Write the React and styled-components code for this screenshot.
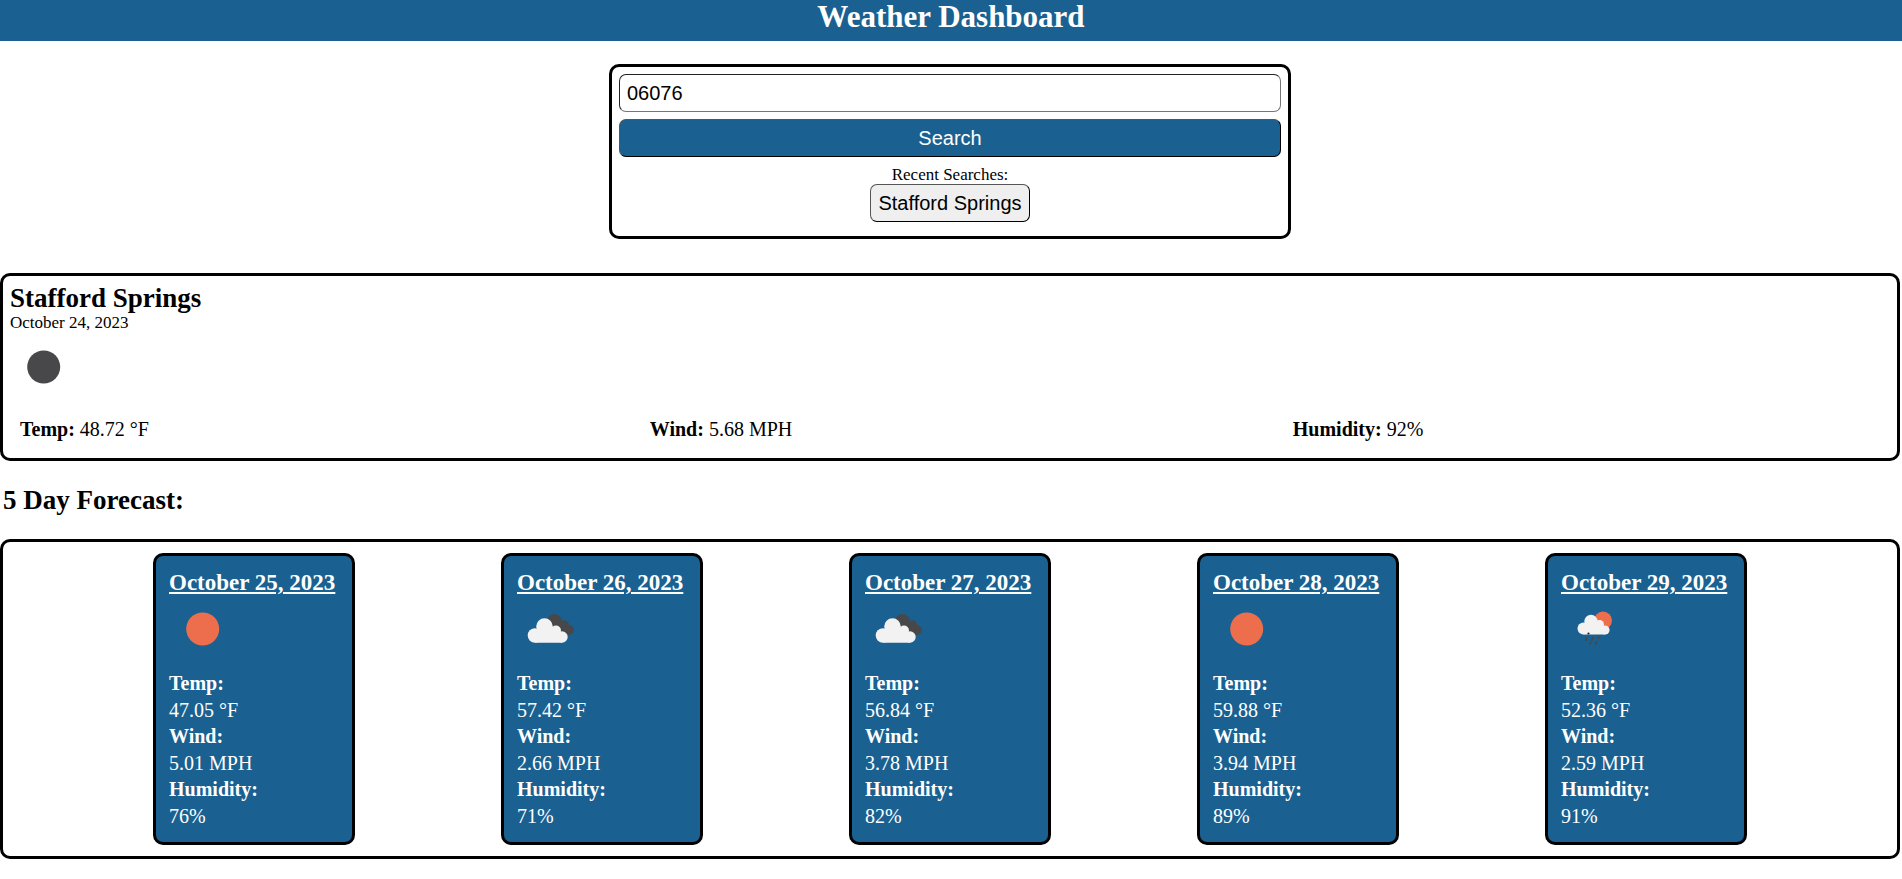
import React, { useState } from "react";
import styled, { createGlobalStyle } from "styled-components";

const BLUE = "#1a6191";

const GlobalStyle = createGlobalStyle`
  *, *::before, *::after { box-sizing: border-box; }
  body {
    margin: 0;
    background: #fff;
    color: #000;
    font-family: "Liberation Serif", "Times New Roman", serif;
    font-size: 17px;
  }
  h1, h2, h3, p, dl, dt, dd { margin: 0; }
`;

const Header = styled.header`
  padding-bottom: 8px;
  background: ${BLUE};
  color: #fff;
  text-align: center;
`;

const Title = styled.h1`
  font-size: 31px;
  line-height: 33px;
`;

const Page = styled.main`
  display: flex;
  flex-direction: column;
  padding-right: 2px;
`;

const Panel = styled.section`
  border: 3px solid #000;
  border-radius: 10px;
`;

const SearchPanel = styled(Panel)`
  width: 35.9%;
  min-width: 300px;
  margin: 23px auto 34px;
  padding: 7px 7px 14px;
`;

const SearchForm = styled.form`
  display: flex;
  flex-direction: column;
  gap: 7px;
`;

const controlStyle = `
  height: 38px;
  padding: 0 7px;
  border-radius: 7px;
  font-family: "Liberation Sans", Arial, sans-serif;
  font-size: 20px;
`;

const SearchInput = styled.input`
  ${controlStyle}
  border: 1px solid;
  border-color: #222 #767676 #767676 #222;
  background: #fff;
  color: #000;
`;

const Button = styled.button`
  ${controlStyle}
  border: 1px solid;
  border-color: #555 #000 #000 #555;
  background: ${(p) => (p.$primary ? BLUE : "#efefef")};
  color: ${(p) => (p.$primary ? "#fff" : "#000")};
  cursor: pointer;
`;

const Recent = styled.div`
  display: flex;
  flex-direction: column;
  align-items: center;
  padding-top: 8px;
  line-height: 19px;
`;

const CurrentPanel = styled(Panel)`
  padding: 7px 7px 14px;
`;

const Heading = styled.h2`
  font-size: 27px;
  line-height: 30px;
`;

const CurrentDate = styled.p`
  margin-bottom: 1px;
  line-height: 20px;
`;

const WeatherIcon = styled.svg`
  display: block;
  width: 67px;
  height: 67px;
`;

const Stats = styled.dl`
  display: grid;
  grid-template-columns: 33.5% 34.2% 1fr;
  padding: 17px 0 3px;
  font-size: 20px;
  line-height: 23px;
`;

const Stat = styled.div`
  display: flex;
  gap: 5px;
  padding-left: 10px;
`;

const StatLabel = styled.dt`
  font-weight: bold;
`;

const ForecastHeading = styled(Heading)`
  padding: 24px 3px;
`;

const ForecastPanel = styled(Panel)`
  display: flex;
  flex-wrap: wrap;
  justify-content: space-evenly;
  row-gap: 11px;
  padding: 11px 4px;
`;

const DayCard = styled.article`
  width: 202px;
  padding: 13px;
  border: 3px solid #000;
  border-radius: 10px;
  background: ${BLUE};
  color: #fff;
`;

const DayTitle = styled.h3`
  font-size: 23px;
  line-height: 27px;
  text-decoration: underline;
  white-space: nowrap;
`;

const DayStats = styled.dl`
  padding-top: 7px;
  font-size: 20px;
`;

const DayLabel = styled.dt`
  font-weight: bold;
  line-height: 27px;
`;

const DayValue = styled.dd`
  line-height: 26px;
`;

function Icon({ kind }) {
  return (
    <WeatherIcon viewBox="0 0 67 67" role="img" aria-label={kind}>
      {kind === "clear night" && <circle cx="33.7" cy="33" r="16.5" fill="#48484a" />}
      {kind === "sunny" && <circle cx="33.7" cy="33" r="16.5" fill="#ec6e4c" />}
      {kind === "cloudy" && (
        <>
          <g fill="#48484a">
            <circle cx="37.5" cy="25.5" r="7.5" />
            <circle cx="47.5" cy="28.7" r="4.5" />
            <circle cx="52" cy="34" r="5" />
            <path d="M38 25L47 28L52 34V39H46L36 34Z" />
          </g>
          <g fill="#f2f2f2">
            <circle cx="27.5" cy="30.5" r="8.3" />
            <circle cx="39" cy="34.5" r="5" />
            <circle cx="18" cy="39.5" r="7.3" />
            <circle cx="45" cy="41" r="5.7" />
            <path d="M18 35L27 30L38 34L45 40V46.7H18Z" />
          </g>
        </>
      )}
      {kind === "sun and rain" && (
        <>
          <circle cx="42" cy="24.5" r="9" fill="#ec6e4c" />
          <g fill="#f2f2f2">
            <circle cx="30" cy="25.5" r="6.7" />
            <circle cx="38.5" cy="28.5" r="4.5" />
            <circle cx="22.5" cy="32.5" r="6" />
            <circle cx="44" cy="34" r="4.6" />
            <path d="M22.5 28L29 25L38.5 28L44 33V38.5H22.5Z" />
          </g>
          <circle cx="27.5" cy="37.5" r="1.1" fill="#222" />
          <g stroke="#48484a" strokeWidth="1.7" strokeLinecap="round">
            <path d="M25.8 42L24.8 44.2M31.8 41.5L30.8 44M37.7 40.5L37 42M29.9 46.5L29.2 47.8M35.7 46L34.5 48.2" />
          </g>
        </>
      )}
    </WeatherIcon>
  );
}

const current = [
  ["Temp:", "48.72 °F"],
  ["Wind:", "5.68 MPH"],
  ["Humidity:", "92%"],
];

const forecast = [
  { date: "October 25, 2023", icon: "sunny", temp: "47.05", wind: "5.01", humidity: 76 },
  { date: "October 26, 2023", icon: "cloudy", temp: "57.42", wind: "2.66", humidity: 71 },
  { date: "October 27, 2023", icon: "cloudy", temp: "56.84", wind: "3.78", humidity: 82 },
  { date: "October 28, 2023", icon: "sunny", temp: "59.88", wind: "3.94", humidity: 89 },
  { date: "October 29, 2023", icon: "sun and rain", temp: "52.36", wind: "2.59", humidity: 91 },
];

export default function App() {
  const [query, setQuery] = useState("06076");

  return (
    <>
      <GlobalStyle />
      <Header>
        <Title>Weather Dashboard</Title>
      </Header>
      <Page>
        <SearchPanel>
          <SearchForm onSubmit={(e) => e.preventDefault()}>
            <SearchInput
              aria-label="City or zip code"
              value={query}
              onChange={(e) => setQuery(e.target.value)}
            />
            <Button $primary type="submit">Search</Button>
          </SearchForm>
          <Recent>
            <p>Recent Searches:</p>
            <Button type="button">Stafford Springs</Button>
          </Recent>
        </SearchPanel>

        <CurrentPanel>
          <Heading>Stafford Springs</Heading>
          <CurrentDate>October 24, 2023</CurrentDate>
          <Icon kind="clear night" />
          <Stats>
            {current.map(([label, value]) => (
              <Stat key={label}>
                <StatLabel>{label}</StatLabel>
                <dd>{value}</dd>
              </Stat>
            ))}
          </Stats>
        </CurrentPanel>

        <ForecastHeading>5 Day Forecast:</ForecastHeading>

        <ForecastPanel>
          {forecast.map((day) => (
            <DayCard key={day.date}>
              <DayTitle>{day.date}</DayTitle>
              <Icon kind={day.icon} />
              <DayStats>
                <DayLabel>Temp:</DayLabel>
                <DayValue>{day.temp} °F</DayValue>
                <DayLabel>Wind:</DayLabel>
                <DayValue>{day.wind} MPH</DayValue>
                <DayLabel>Humidity:</DayLabel>
                <DayValue>{day.humidity}%</DayValue>
              </DayStats>
            </DayCard>
          ))}
        </ForecastPanel>
      </Page>
    </>
  );
}
